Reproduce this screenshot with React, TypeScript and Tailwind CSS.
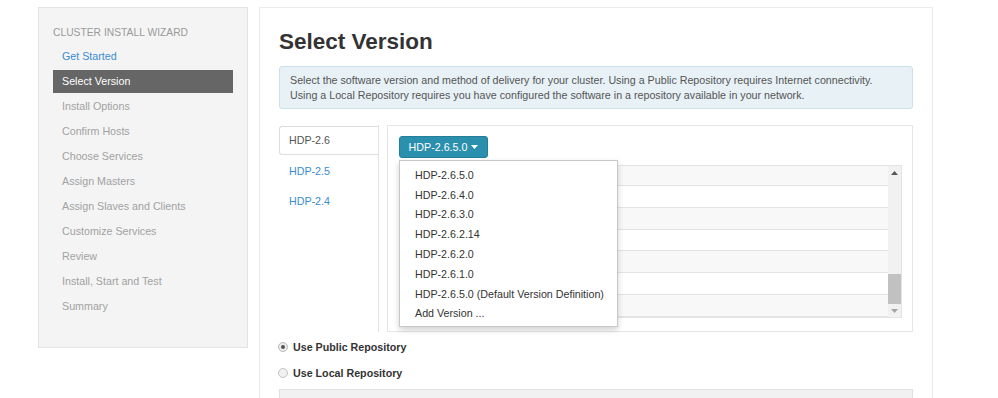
import React from "react";

const steps = [
  "Install Options",
  "Confirm Hosts",
  "Choose Services",
  "Assign Masters",
  "Assign Slaves and Clients",
  "Customize Services",
  "Review",
  "Install, Start and Test",
  "Summary",
];

const versions = [
  "HDP-2.6.5.0",
  "HDP-2.6.4.0",
  "HDP-2.6.3.0",
  "HDP-2.6.2.14",
  "HDP-2.6.2.0",
  "HDP-2.6.1.0",
  "HDP-2.6.5.0 (Default Version Definition)",
  "Add Version ...",
];

export default function App() {
  return (
    <div
      className="w-[998px] h-[398px] overflow-hidden bg-white flex items-start pt-[7px] pl-[38px] gap-[11px] text-[10.7px] text-[#333]"
      style={{ fontFamily: '"Liberation Sans", Arial, sans-serif' }}
    >
      {/* Sidebar */}
      <div className="w-[210px] h-[341px] shrink-0 border border-[#e4e4e4] bg-[#f4f4f4] pt-[17px] pl-[14px] pr-[14px]">
        <div className="h-[15px] leading-[15px] text-[10.3px] text-[#9a9a9a]">CLUSTER INSTALL WIZARD</div>
        <div className="mt-[4px] flex flex-col">
          <div className="h-[25px] flex items-center pl-[9px] text-[#3a8cd0]">Get Started</div>
          <div className="h-[25px] py-[1px]">
            <div className="h-[23px] bg-[#666666] text-white flex items-center pl-[9px]">Select Version</div>
          </div>
          {steps.map((s) => (
            <div key={s} className="h-[25px] flex items-center pl-[9px] text-[#a2a2a2]">
              {s}
            </div>
          ))}
        </div>
      </div>

      {/* Main panel */}
      <div className="w-[674px] h-[400px] shrink-0 border border-[#ebebeb] pt-[20px] px-[19px]">
        <div className="h-[27px] leading-[27px] text-[22.5px] font-bold text-[#333]">Select Version</div>
        <div className="mt-[11px] border border-[#cde1ea] bg-[#e7f1f6] rounded-[3px] pt-[6px] pb-[5px] pl-[10px] text-[#555] leading-[15px]">
          <div>Select the software version and method of delivery for your cluster. Using a Public Repository requires Internet connectivity.</div>
          <div>Using a Local Repository requires you have configured the software in a repository available in your network.</div>
        </div>

        <div className="mt-[16px] flex">
          {/* tabs */}
          <div className="w-[100px] h-[207px] border-r border-[#e2e2e2] pt-[1px] shrink-0">
            <div className="h-[29px] border-l border-t border-b border-[#dddddd] rounded-l-[3px] flex items-center pl-[9px] text-[#555]">HDP-2.6</div>
            <div className="h-[30px] pt-[2px] flex items-center pl-[10px] text-[#3a8cd0]">HDP-2.5</div>
            <div className="h-[30px] pt-[2px] flex items-center pl-[10px] text-[#3a8cd0]">HDP-2.4</div>
          </div>

          {/* content */}
          <div className="ml-[8px] w-[526px] h-[207px] border border-[#e6e6e6] pt-[10px] pl-[11px] pr-[10px] relative">
            <div className="w-[89px] h-[22px] rounded-[3px] bg-[#2b8fae] border border-[#247d99] text-white flex items-center justify-center gap-[4px]">
              <span>HDP-2.6.5.0</span>
              <svg width="7" height="4" viewBox="0 0 7 4"><path d="M0 0h7L3.5 4z" fill="#fff" /></svg>
            </div>

            {/* table */}
            <div className="mt-[7px] h-[153px] border border-[#e3e3e3] flex">
              <div className="flex-1 flex flex-col">
                {[0, 1, 2, 3, 4, 5, 6].map((i) => (
                  <div
                    key={i}
                    className={`${i === 0 ? "h-[20px]" : "h-[22px]"} border-b border-[#e4e4e4] ${i % 2 === 0 ? "bg-[#f8f8f8]" : "bg-white"}`}
                  />
                ))}
              </div>
              <div className="w-[13px] bg-[#f1f1f1] flex flex-col items-center">
                <div className="h-[14px] flex items-center">
                  <svg width="7" height="4" viewBox="0 0 7 4"><path d="M0 4h7L3.5 0z" fill="#555" /></svg>
                </div>
                <div className="flex-1 w-full flex flex-col justify-end">
                  <div className="h-[30px] w-full bg-[#c1c1c1]" />
                </div>
                <div className="h-[13px] flex items-center">
                  <svg width="7" height="4" viewBox="0 0 7 4"><path d="M0 0h7L3.5 4z" fill="#a3a3a3" /></svg>
                </div>
              </div>
            </div>

            {/* dropdown menu */}
            <div className="absolute left-[11px] top-[34px] w-[219px] h-[167px] bg-white border border-[#c8c8c8] shadow-[0_3px_6px_rgba(0,0,0,0.18)] pt-[4px]">
              {versions.map((v) => (
                <div key={v} className="h-[19.8px] flex items-center pl-[15px] text-[#333]">
                  {v}
                </div>
              ))}
            </div>
          </div>
        </div>

        {/* radios */}
        <div className="mt-[2px] flex flex-col">
          <label className="h-[26px] flex items-center gap-[5px] font-bold text-[#333] ml-[-1px]">
            <span className="w-[10px] h-[10px] rounded-full border border-[#b9b9b9] bg-[#ececec] flex items-center justify-center">
              <span className="w-[4px] h-[4px] rounded-full bg-[#555]" />
            </span>
            Use Public Repository
          </label>
          <label className="h-[26px] flex items-center gap-[5px] font-bold text-[#333] ml-[-1px]">
            <span className="w-[10px] h-[10px] rounded-full border border-[#c2c2c2] bg-[#f0f0f0]" />
            Use Local Repository
          </label>
        </div>
        <div className="mt-[3px] h-[40px] border border-[#e0e0e0] bg-[#f1f1f1]" />
      </div>
    </div>
  );
}
